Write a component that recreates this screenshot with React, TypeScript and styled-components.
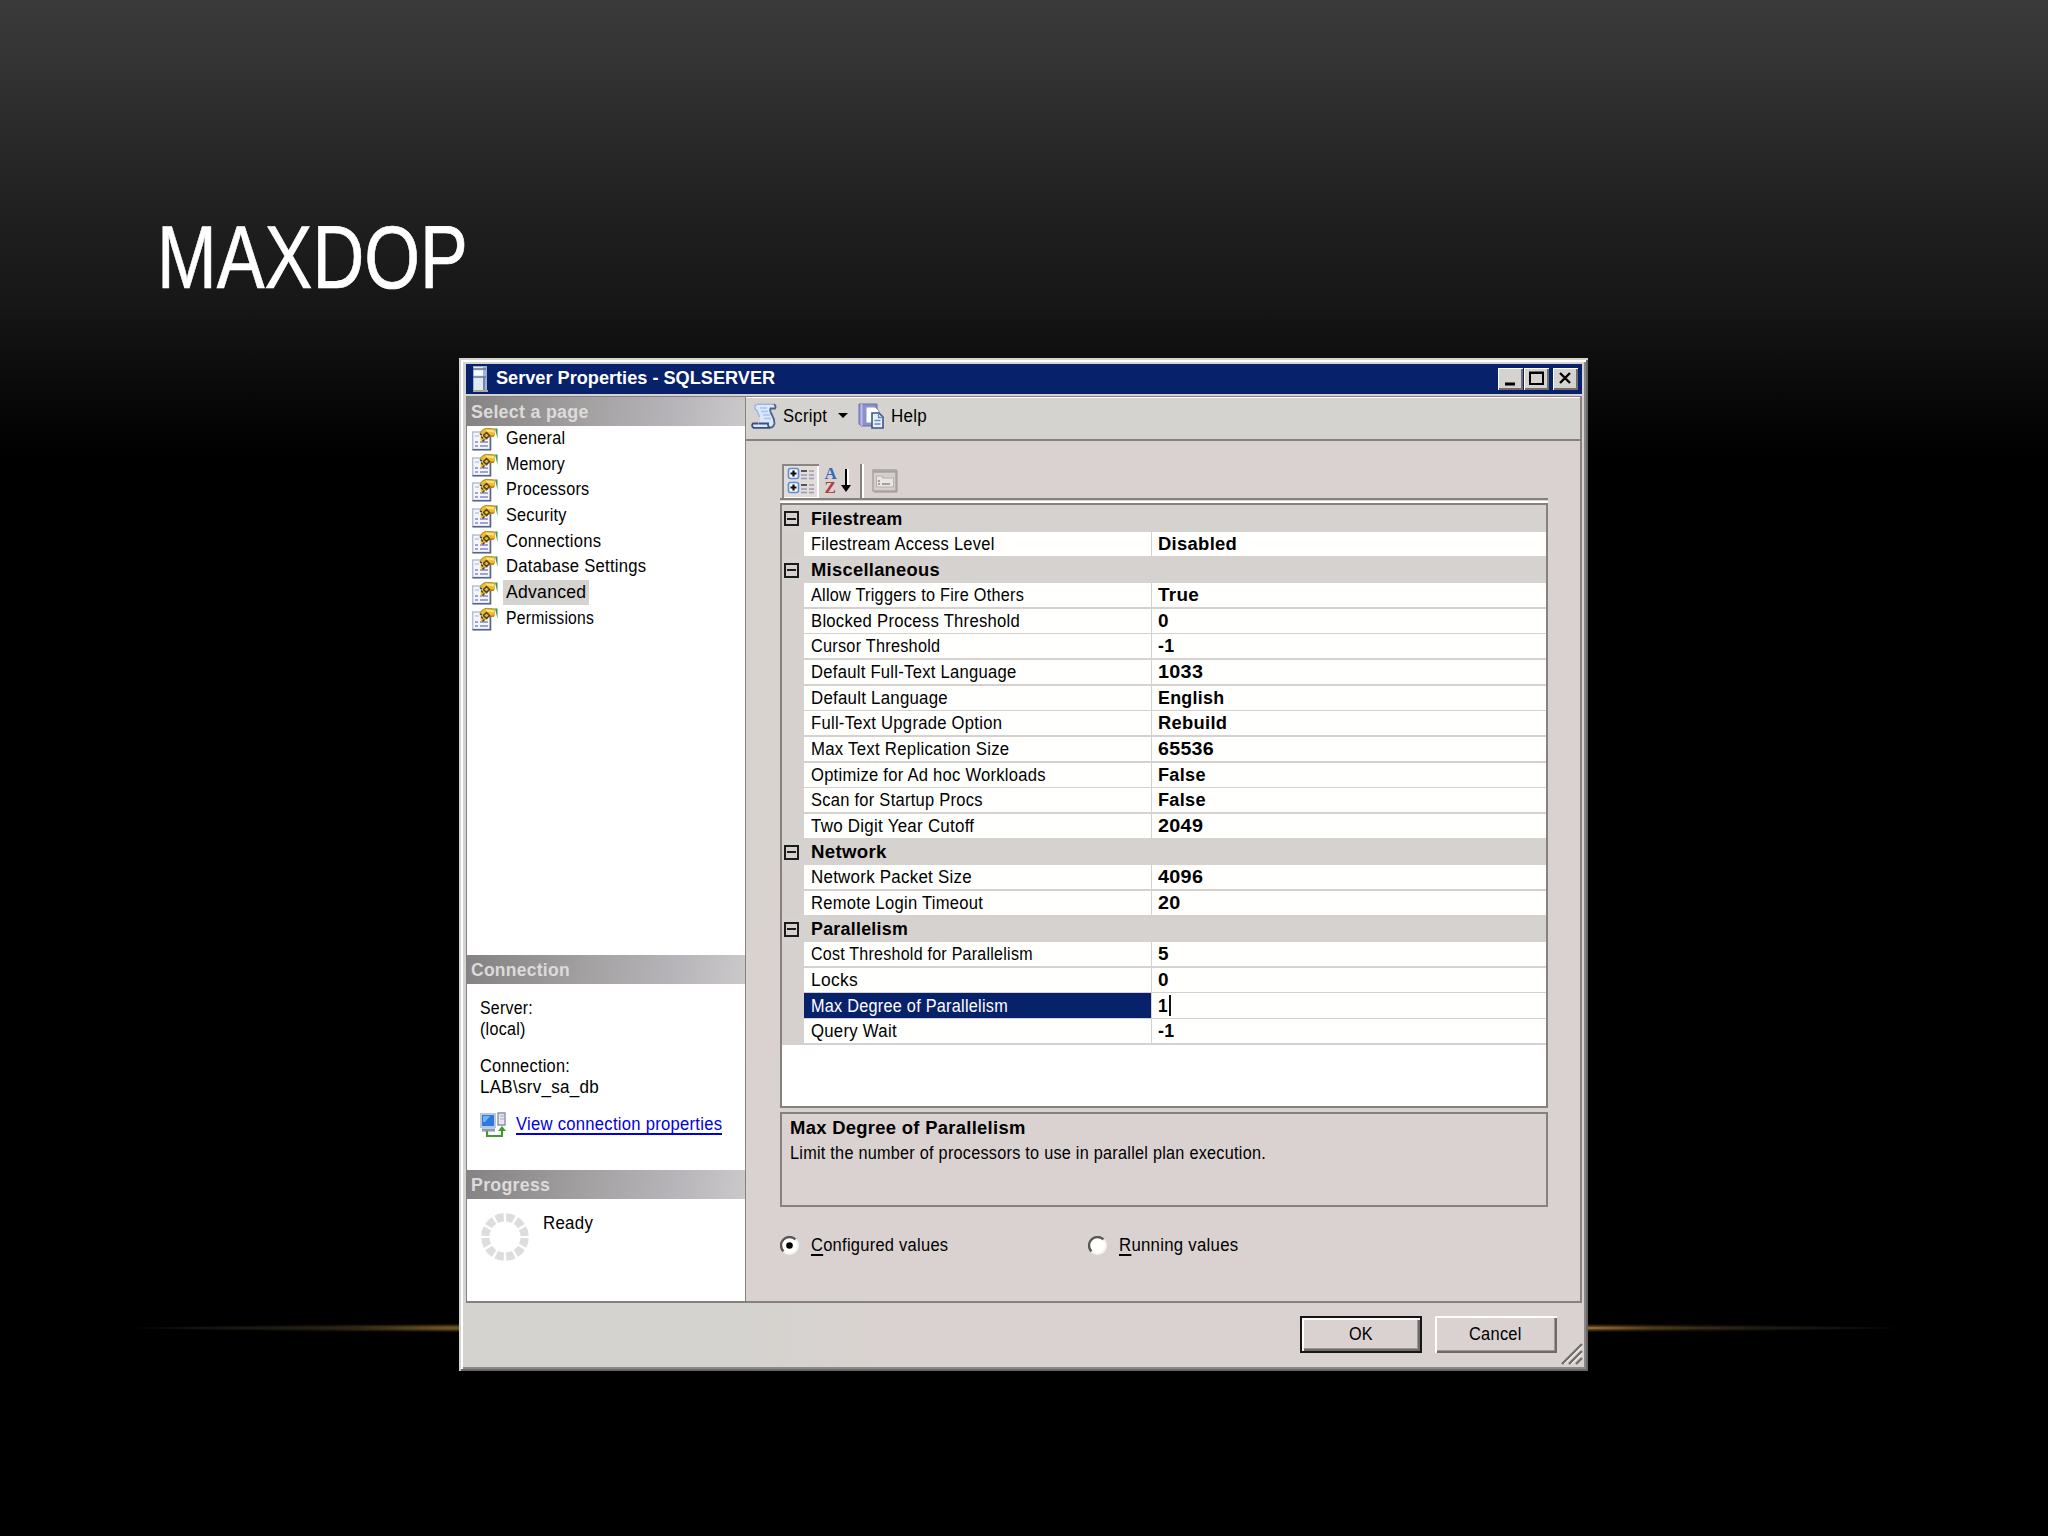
import React, { useLayoutEffect, useRef, useState } from "react";
import styled, { createGlobalStyle } from "styled-components";

const Global = createGlobalStyle`
  *{box-sizing:border-box}
  body{margin:0;background:#000;font-family:"Liberation Sans",Arial,sans-serif}
`;
const GREY = "#d5d3cf";
const PINK = "#dad2d0";
const LINE = "#86817f";

const Slide = styled.main`
  position:relative;width:2048px;height:1536px;overflow:hidden;
  padding:205px 0 0 157px;
  background:linear-gradient(#3a3a3a 0,#353535 50px,#2b2b2b 125px,#202020 210px,#171717 300px,#0a0a0a 385px,#000 460px);
`;
const Title = styled.h1`
  margin:0;height:153px;color:#fff;font-weight:400;font-size:88px;line-height:104px;
  -webkit-text-stroke:.7px #fff;
`;
const Flare = styled.div`
  position:absolute;left:130px;top:1318px;width:1770px;height:20px;
  background:
    linear-gradient(90deg,transparent,#1b1b19 8%,#2c2918 13%,#685820 18%,#a87c3a 50%,#a0712f 82%,#4c3a1c 86%,#1c1a18 92%,transparent) 0 9px/100% 2px no-repeat,
    radial-gradient(closest-side,#7a5a24,#5b421b 70%,#1f170a 82%,transparent) 0 4px/100% 12px no-repeat;
`;
const Window = styled.section`
  position:relative;margin-left:302px;width:1129px;height:1013px;padding:6px 6px 5px 7px;
  background:linear-gradient(90deg,${GREY} 25%,${PINK} 40%);display:flex;flex-direction:column;
  box-shadow:inset 2px 2px #d5d3cf,inset -2px -2px #6a6866,inset 4px 4px #fff,inset -4px -4px #8b8886;
`;
const TitleBar = styled.header`
  height:30px;flex:none;background:#08216b;display:flex;align-items:center;padding:0 4px 1px 7px;gap:8px;color:#fff;
`;
const Spacer = styled.div`flex:1;`;
const Caption = styled.button<{ $gap?: boolean }>`
  width:25px;height:22px;padding:0;border:0;margin-left:${p => (p.$gap ? -4 : -7)}px;
  background:${GREY};box-shadow:inset 1px 1px #fff,inset -2px -2px #716e6c;display:grid;place-items:center;
`;
const Body = styled.div`
  height:907px;flex:none;margin-top:2px;display:grid;grid-template-columns:279px 1fr;
  border:1px solid ${LINE};border-width:1px 2px 2px 1px;
`;
const Side = styled.aside`
  background:#fff;border-right:1px solid ${LINE};display:flex;flex-direction:column;
`;
const SideHead = styled.div`
  height:29px;flex:none;padding:0 0 0 4px;display:flex;align-items:center;color:#dddbda;
  background:linear-gradient(100deg,#858283,#a5a2a4 45%,#b7b5b9 75%,#ccc9cb);
`;
const Pages = styled.nav`height:529px;flex:none;`;
const Page = styled.div`
  height:25.7px;display:flex;align-items:center;padding-left:5px;gap:5px;
`;
const PageName = styled.span<{ $on?: boolean }>`
  height:25px;padding:0 3px 2px;display:flex;align-items:center;background:${p => (p.$on ? GREY : "transparent")};
`;
const Info = styled.div`
  height:186px;flex:none;padding:13px 0 0 13px;display:flex;flex-direction:column;
`;
const InfoLine = styled.div<{ $top?: number }>`
  height:21px;display:flex;align-items:center;margin-top:${p => p.$top || 0}px;
`;
const LinkRow = styled.a`
  display:flex;gap:9px;align-items:center;margin-top:15px;height:26px;color:#0000e0;
`;
const LinkText = styled.span`border-bottom:2px solid #0000e0;height:20px;display:flex;align-items:center;`;
const Ready = styled.div`display:flex;padding:14px 0 0 14px;gap:14px;`;
const ReadyText = styled.div`height:20px;display:flex;align-items:center;`;

const Main = styled.div`display:flex;flex-direction:column;min-width:0;`;
const Tools = styled.div`
  height:44px;flex:none;border-bottom:2px solid ${LINE};border-top:1px solid #fff;background:${GREY};
  display:flex;align-items:center;padding:0 0 6px 5px;
`;
const ToolGap = styled.div<{ $w: number }>`width:${p => p.$w}px;flex:none;`;
const Content = styled.div`
  flex:1;min-height:0;padding:23px 32px 0 34px;display:flex;flex-direction:column;
  background:linear-gradient(100deg,#d7d3cf 0,${PINK} 16%);
`;
const GridTools = styled.div`
  height:36px;flex:none;border-bottom:2px solid ${LINE};display:flex;align-items:flex-start;padding-left:2px;
`;
const Pressed = styled.div`
  width:37px;height:34px;background:#e2dddb;box-shadow:inset 2px 2px #8b8684,inset -2px -1px #fff;display:grid;place-items:center;
`;
const Tool = styled.div<{ $w: number }>`width:${p => p.$w}px;height:34px;display:grid;place-items:center;`;
const Sep = styled.div`width:4px;height:34px;border-left:2px solid ${LINE};border-right:2px solid #fff;`;
const Grid = styled.div`
  height:605px;flex:none;margin-top:3px;border:2px solid ${LINE};background:#fff;box-shadow:0 -2px #fff;
`;
const GridBody = styled.div`padding-top:1px;background:#d8d2d0;`;
const Category = styled.div`
  height:25.66px;display:grid;grid-template-columns:22px 1fr;align-items:center;background:#d6d2cf;
`;
const Box = styled.span`
  width:15px;height:15px;border:2px solid #1c1a1a;margin-left:2px;display:grid;place-items:center;
  &::after{content:"";width:9px;height:2px;background:#1c1a1a}
`;
const Row = styled.div`height:25.66px;display:grid;grid-template-columns:22px 347px 1fr;background:#d6d1cf;`;
const Name = styled.div<{ $on?: boolean }>`
  margin-bottom:1.6px;display:flex;align-items:center;padding-left:7px;
  background:${p => (p.$on ? "#08216b" : "#fffffd")};color:${p => (p.$on ? "#fff" : "#000")};
`;
const Value = styled.div`margin:0 0 1.6px 1px;display:flex;align-items:center;padding-left:6px;background:#fffffd;`;
const Indent = styled.div`padding-left:7px;display:flex;align-items:center;`;
const Caret = styled.i`width:2px;height:21px;background:#111;margin-left:1px;`;
const Help = styled.div`
  height:95px;flex:none;margin-top:4px;border:2px solid ${LINE};padding:2px 0 0 8px;
`;
const HelpLine = styled.div`height:24.5px;display:flex;align-items:center;`;
const Radios = styled.div`display:flex;margin-top:25px;height:26px;`;
const Radio = styled.label`width:308px;display:flex;align-items:center;gap:12px;`;
const Actions = styled.footer`
  display:flex;gap:13px;padding:13px 25px 0 0;justify-content:flex-end;
`;
const Button = styled.button<{ $main?: boolean }>`
  width:122px;height:37px;padding:0 1px 1px 0;border:${p => (p.$main ? "2px solid #171515" : "0")};
  background:${PINK};display:grid;place-items:center;
  box-shadow:inset 2px 2px #fff,inset -2px -2px #6e6a69,inset -3px -3px #9c9896;
`;
const Grip = styled.svg`position:absolute;right:5px;bottom:6px;`;

const Holder = styled.span<{ $w: number }>`display:inline-block;width:${p => p.$w}px;white-space:nowrap;`;
const Glyphs = styled.span<{ $b?: boolean; $size?: number }>`
  display:inline-block;transform-origin:0 50%;
  font-family:"Liberation Sans",Arial,sans-serif;
  font-size:${p => p.$size || 18.9}px;font-weight:${p => (p.$b ? 700 : 400)};
  letter-spacing:${p => (p.$size ? 0 : 0.3)}px;
`;
const Key = styled.u`text-decoration-thickness:2px;text-underline-offset:3px;`;

type TextProps = { w: number; b?: boolean; size?: number; children: React.ReactNode };
/** Text condensed horizontally to a given width. */
function Text({ w, b, size, children }: TextProps) {
  const ref = useRef<HTMLSpanElement>(null);
  const [k, setK] = useState(1);
  useLayoutEffect(() => {
    if (ref.current) setK(w / ref.current.offsetWidth);
  }, [w]);
  return (
    <Holder $w={w}>
      <Glyphs ref={ref} $b={b} $size={size} style={{ transform: `scaleX(${k})` }}>{children}</Glyphs>
    </Holder>
  );
}

const ServerIcon = () => (
  <svg width="15" height="26" viewBox="0 0 15 26">
    <path d="M0 0h14v25H0z" fill="#9fb2cf" />
    <path d="M1 1h9v23H1z" fill="#dfe8f3" />
    <path d="M0 3h13M0 11h13" stroke="#61769c" strokeWidth="1.5" />
    <path d="M1 6h9M1 8h9" stroke="#fff" strokeWidth="1.5" />
    <path d="M11 12v12" stroke="#7387ab" strokeWidth="2" />
    <path d="M0 25h15" stroke="#a9a79a" strokeWidth="2" />
  </svg>
);
const PageIcon = () => (
  <svg width="26" height="24" viewBox="0 0 26 24">
    <path d="M.7 5h17.500v17.500H.7z" fill="#f4f6fc" stroke="#b4bfd6" strokeWidth="1.4" />
    <path d="M.5 22.700h18V9" fill="none" stroke="#56658a" strokeWidth="1.6" />
    <path d="M3 15h3M8 15h8M3 19h3M8 19h8" stroke="#8185ce" strokeWidth="1.6" />
    <path d="M3 9h4" stroke="#c2c8d6" strokeWidth="1.5" />
    <path d="M7.500 6.500Q10 1.500 14 1.200L23 2v7l-6 .5-2 3.500-3-.5-3 2.500-.5-3.500 3-3.500z" fill="#efbb2a" />
    <path d="M8 6.500Q10 2 14 1.300l9 .7" fill="none" stroke="#b28d33" strokeWidth="1" />
    <path d="M14 3.500l8 .8" stroke="#ffe27a" strokeWidth="2.200" />
    <path d="M17 9.500l5-.5" stroke="#b07d1d" strokeWidth="1.500" />
    <path d="M14.500 5.500l3 3-3 3-3-3zM9 9.500l2 2M12.500 12.500l-2 2M8 7l2 1" fill="none" stroke="#4b4322" strokeWidth="1.5" />
    <path d="M23 1.500h2.500V12z" fill="#3f9350" />
  </svg>
);
const ScriptIcon = () => (
  <svg width="26" height="26" viewBox="0 0 26 26">
    <path d="M6 1.200h17Q25.500 3 24 5.500h-4.500Q18.500 8 21 12t2.500 8.500Q22.500 24.500 19 24.800H3Q0 23 2 20.500h5.500Q10 18.500 8.500 14L5.500 7Q3 5 4 2.500z" fill="#dbe7fb" />
    <path d="M8.500 14L6 7.500Q2.500 5.500 4.500 2L7 1.200h16" fill="none" stroke="#9fb3dd" strokeWidth="1.400" />
    <path d="M23 1.200Q25.500 3 24 5.500h-4.500Q18.500 8 21 12t2.500 8.500Q22.500 24.500 19 24.800" fill="none" stroke="#4c618f" strokeWidth="1.800" />
    <path d="M7.500 20.500H2Q0 22.500 2.500 24.800H19M8 20.500h9q-.5 3 2 4" fill="none" stroke="#3c4f80" strokeWidth="1.800" />
    <path d="M9 5h7M10 8.500h7M12 12h7M13 15.500h7" stroke="#a9c3f2" strokeWidth="1.500" />
  </svg>
);
const HelpIcon = () => (
  <svg width="26" height="26" viewBox="0 0 26 26">
    <path d="M1 1h18v22H3l-2-2z" fill="#8d8fcd" stroke="#6b6cab" />
    <path d="M3.500 1v22" stroke="#b9baea" strokeWidth="2" />
    <path d="M8 4h9l4 4v12H8z" fill="#fff" stroke="#8698bd" />
    <path d="M14 10h7l4 4v11H14z" fill="#e8f0fc" stroke="#3c5487" strokeWidth="1.6" />
    <path d="M20.500 10v4.500H25M16.500 17.500h6M16.500 21h6" fill="none" stroke="#6d87b8" strokeWidth="1.3" />
  </svg>
);
const CategoryIcon = () => (
  <svg width="28" height="28" viewBox="0 0 28 28">
    {[1, 15].map(y => (
      <g key={y}>
        <rect x="1.5" y={y + 0.5} width="10" height="10" rx="2" fill="#f5f9ff" stroke="#5d8fcd" strokeWidth="1.6" />
        <path d={`M3.500 ${y + 5.5}h6M6.500 ${y + 2.5}v6`} stroke="#111" strokeWidth="2.200" />
        <path d={`M14 ${y + 3}h6`} stroke="#333" strokeWidth="1.6" />
        <path d={`M14 ${y + 7}h6M22 ${y + 7}h5M22 ${y + 3}h5M14 ${y + 10.5}h6M22 ${y + 10.5}h5`} stroke="#989db3" strokeWidth="1.5" />
      </g>
    ))}
  </svg>
);
const SortLetters = styled.span`
  display:grid;grid-template-rows:14px 14px;font:700 17px/14px "Liberation Serif",serif;width:12px;
`;
const SortA = styled.span`color:#3768bb;`;
const SortZ = styled.span`color:#b23d44;`;
const SortBox = styled.div`display:flex;gap:3px;align-items:center;margin-right:3px;`;
const PropIcon = () => (
  <svg width="26" height="24" viewBox="0 0 26 24">
    <path d="M1 1h23v21H1z" fill="#d4cfcd" stroke="#a8a3a2" strokeWidth="1.5" />
    <path d="M1 2.500h23" stroke="#a8a3a2" strokeWidth="2.500" />
    <path d="M4.500 7h6v2h11v9h-17z" fill="#e9e5e3" stroke="#b4afae" />
    <path d="M6 12h2M6 15h2M10 15h8" stroke="#8f8a89" strokeWidth="1.5" />
    <path d="M25 1v22H2" stroke="#989392" fill="none" />
  </svg>
);
const LinkIcon = () => (
  <svg width="27" height="26" viewBox="0 0 27 26">
    <path d="M1 2h14v13H1z" fill="#2f78dd" stroke="#b9c7de" strokeWidth="2" />
    <path d="M3 4h7l-5 6H3z" fill="#74b2fa" />
    <path d="M2 18h13" stroke="#8b9ab5" strokeWidth="3" />
    <path d="M18 1h7v12h-7z" fill="#e5e8ee" stroke="#8891a5" strokeWidth="1.4" />
    <path d="M20 4h4M20 7h4" stroke="#a3aabb" />
    <path d="M7 19v5h15v-6" fill="none" stroke="#3f9b2e" strokeWidth="2" />
    <path d="M18 19l4-5 4 5z" fill="#3f9b2e" />
  </svg>
);
const Ring = () => (
  <svg width="48" height="48" viewBox="-24 -24 48 48">
    {Array.from({ length: 12 }, (_, i) => (
      <path key={i} transform={`rotate(${i * 30 + 15})`} d="M-4.8-23.2Q0-24.6 4.8-23.2L3-15.3Q0-16-3-15.3z" fill="#dedddd" />
    ))}
  </svg>
);
const Dial = ({ on }: { on?: boolean }) => (
  <svg width="19" height="19" viewBox="0 0 19 19">
    <circle cx="9.5" cy="9.5" r="8" fill="#fffffd" />
    <path d="M3.5 15.5A8.3 8.3 0 0 1 15.5 3.5" fill="none" stroke="#5b5654" strokeWidth="2.4" />
    <path d="M15.5 3.5A8.3 8.3 0 0 1 3.5 15.5" fill="none" stroke="#f5f2f0" strokeWidth="2" />
    {on && <circle cx="9.5" cy="9.5" r="3.3" fill="#000" />}
  </svg>
);

const PAGES: [string, number][] = [
  ["General", 59], ["Memory", 59], ["Processors", 83], ["Security", 61],
  ["Connections", 95], ["Database Settings", 140], ["Advanced", 80], ["Permissions", 88],
];
type Item = [string, number, string, number];
const GROUPS: { name: string; w: number; items: Item[] }[] = [
  { name: "Filestream", w: 92, items: [["Filestream Access Level", 184, "Disabled", 79]] },
  {
    name: "Miscellaneous", w: 129, items: [
      ["Allow Triggers to Fire Others", 213, "True", 41],
      ["Blocked Process Threshold", 209, "0", 11],
      ["Cursor Threshold", 129, "-1", 16],
      ["Default Full-Text Language", 206, "1033", 45],
      ["Default Language", 137, "English", 66],
      ["Full-Text Upgrade Option", 191, "Rebuild", 69],
      ["Max Text Replication Size", 198, "65536", 56],
      ["Optimize for Ad hoc Workloads", 235, "False", 48],
      ["Scan for Startup Procs", 172, "False", 48],
      ["Two Digit Year Cutoff", 163, "2049", 45],
    ],
  },
  { name: "Network", w: 76, items: [["Network Packet Size", 161, "4096", 45], ["Remote Login Timeout", 172, "20", 23]] },
  {
    name: "Parallelism", w: 97, items: [
      ["Cost Threshold for Parallelism", 222, "5", 11], ["Locks", 47, "0", 11],
      ["Max Degree of Parallelism", 197, "1", 10], ["Query Wait", 86, "-1", 16],
    ],
  },
];

export default function App() {
  return (
    <Slide>
      <Global />
      <Title><Text w={311} size={89}>MAXDOP</Text></Title>
      <Flare />
      <Window>
        <TitleBar>
          <ServerIcon />
          <Text w={279} b size={17.5}>Server Properties - SQLSERVER</Text>
          <Spacer />
          <Caption>
            <svg width="19" height="19"><path d="M4 15h10" stroke="#000" strokeWidth="3" /></svg>
          </Caption>
          <Caption>
            <svg width="19" height="19"><path d="M3 3.5h13v11.5H3zM3 4h13" fill="none" stroke="#000" strokeWidth="2" /></svg>
          </Caption>
          <Caption $gap>
            <svg width="19" height="19"><path d="M4 4l10 10M14 4L4 14" stroke="#000" strokeWidth="2.4" /></svg>
          </Caption>
        </TitleBar>
        <Body>
          <Side>
            <SideHead><Text w={118} b>Select a page</Text></SideHead>
            <Pages>
              {PAGES.map(([name, w]) => (
                <Page key={name}>
                  <PageIcon />
                  <PageName $on={name === "Advanced"}><Text w={w}>{name}</Text></PageName>
                </Page>
              ))}
            </Pages>
            <SideHead><Text w={99} b>Connection</Text></SideHead>
            <Info>
              <InfoLine><Text w={53}>Server:</Text></InfoLine>
              <InfoLine><Text w={46}>(local)</Text></InfoLine>
              <InfoLine $top={16}><Text w={90}>Connection:</Text></InfoLine>
              <InfoLine><Text w={119}>LAB\srv_sa_db</Text></InfoLine>
              <LinkRow>
                <LinkIcon />
                <LinkText><Text w={206}>View connection properties</Text></LinkText>
              </LinkRow>
            </Info>
            <SideHead><Text w={79} b>Progress</Text></SideHead>
            <Ready>
              <Ring />
              <ReadyText><Text w={50}>Ready</Text></ReadyText>
            </Ready>
          </Side>
          <Main>
            <Tools>
              <ScriptIcon />
              <ToolGap $w={6} />
              <Text w={44}>Script</Text>
              <ToolGap $w={11} />
              <svg width="10" height="6"><path d="M0 0h10L5 5z" /></svg>
              <ToolGap $w={10} />
              <HelpIcon />
              <ToolGap $w={7} />
              <Text w={36}>Help</Text>
            </Tools>
            <Content>
              <GridTools>
                <Pressed><CategoryIcon /></Pressed>
                <Tool $w={41}>
                  <SortBox>
                    <SortLetters><SortA>A</SortA><SortZ>Z</SortZ></SortLetters>
                    <svg width="12" height="26">
                      <path d="M8 1v18" stroke="#fff" strokeWidth="2" />
                      <path d="M6 1v20" stroke="#000" strokeWidth="2" />
                      <path d="M1 17h10L6 24z" />
                    </svg>
                  </SortBox>
                </Tool>
                <Sep />
                <Tool $w={41}><PropIcon /></Tool>
              </GridTools>
              <Grid>
                <GridBody>
                  {GROUPS.map(g => (
                    <React.Fragment key={g.name}>
                      <Category><Box /><Indent><Text w={g.w} b>{g.name}</Text></Indent></Category>
                      {g.items.map(([name, w, value, vw]) => {
                        const on = name === "Max Degree of Parallelism";
                        return (
                          <Row key={name}>
                            <span />
                            <Name $on={on}><Text w={w}>{name}</Text></Name>
                            <Value><Text w={vw} b>{value}</Text>{on && <Caret />}</Value>
                          </Row>
                        );
                      })}
                    </React.Fragment>
                  ))}
                </GridBody>
              </Grid>
              <Help>
                <HelpLine><Text w={236} b>Max Degree of Parallelism</Text></HelpLine>
                <HelpLine><Text w={476}>Limit the number of processors to use in parallel plan execution.</Text></HelpLine>
              </Help>
              <Radios>
                <Radio><Dial on /><Text w={137}><Key>C</Key>onfigured values</Text></Radio>
                <Radio><Dial /><Text w={119}><Key>R</Key>unning values</Text></Radio>
              </Radios>
            </Content>
          </Main>
        </Body>
        <Actions>
          <Button $main><Text w={24}>OK</Text></Button>
          <Button><Text w={53}>Cancel</Text></Button>
        </Actions>
        <Grip width="22" height="22">
          <path d="M1 21L21 1M8 21L21 8M15 21l6-6" stroke="#716d6b" strokeWidth="2.4" />
          <path d="M3.500 21L21 3.500M10.500 21L21 10.500" stroke="#fff" strokeWidth="1" />
        </Grip>
      </Window>
    </Slide>
  );
}
